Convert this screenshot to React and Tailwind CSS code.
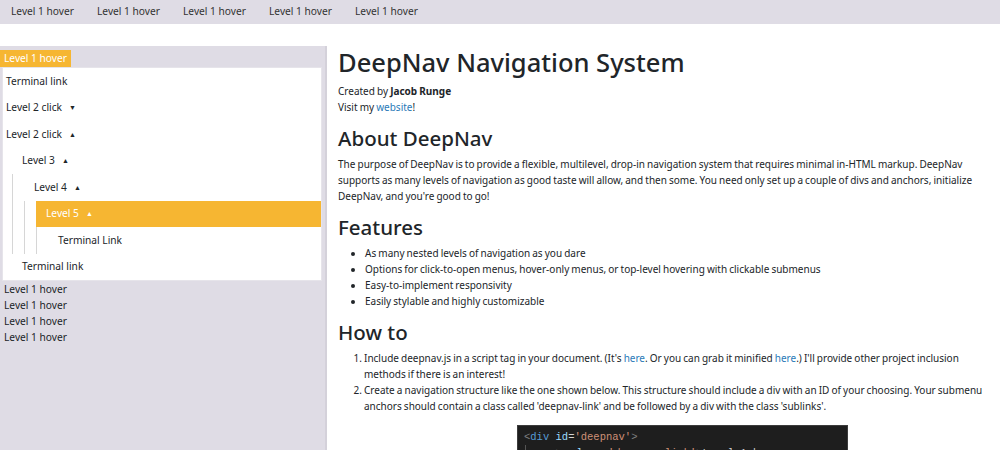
const topItems = ['Level 1 hover', 'Level 1 hover', 'Level 1 hover', 'Level 1 hover', 'Level 1 hover']

const Caret = ({ up }) => (
  <span className="ml-[7px] text-[7px] leading-none">{up ? '▲' : '▼'}</span>
)

const Row = ({ children, className = '' }) => (
  <div className={`h-[26.5px] flex items-center ${className}`}>{children}</div>
)

const Sidebar = () => (
  <aside className="w-[327px] shrink-0 bg-[#dfdce5] border-r-2 border-[#d4d1da] pt-[4px] text-[10.2px] text-[#212529]">
    <div className="inline-block bg-[#f6b632] text-white px-[4px] h-[17px] leading-[17px]">Level 1 hover</div>
    <div className="ml-[2px] w-[320px] bg-white border border-[#e6e4ea]">
      <Row className="pl-[3px]">Terminal link</Row>
      <Row className="pl-[3px]">Level 2 click <Caret /></Row>
      <Row className="pl-[3px]">Level 2 click <Caret up /></Row>
      <Row className="pl-[19px]">Level 3 <Caret up /></Row>
      <div className="ml-[9px] border-l border-[#d6d6d6]">
        <Row className="pl-[21px]">Level 4 <Caret up /></Row>
        <div className="ml-[11px] border-l border-[#d6d6d6] pl-[11px]">
          <Row className="pl-[10px] bg-[#f6b632] text-white">Level 5 <Caret up /></Row>
          <div className="border-l border-[#d6d6d6]">
            <Row className="pl-[21px]">Terminal Link</Row>
          </div>
        </div>
      </div>
      <Row className="pl-[19px]">Terminal link</Row>
    </div>
    <div className="pl-[4px] leading-[16px]">
      <div>Level 1 hover</div>
      <div>Level 1 hover</div>
      <div>Level 1 hover</div>
      <div>Level 1 hover</div>
    </div>
  </aside>
)

const Link = ({ children }) => <a className="text-[#2a7ab8]">{children}</a>

const Content = () => (
  <main className="flex-1 pl-[11px] pr-[6px] text-[10px] leading-[16px] [word-spacing:-0.5px] text-[#212529]">
    <h1 className="text-[25.5px] leading-[32px] font-medium mb-[5px] [word-spacing:0]">DeepNav Navigation System</h1>
    <p>Created by <b>Jacob Runge</b></p>
    <p>Visit my <Link>website</Link>!</p>
    <h2 className="mt-[11px] text-[20.5px] leading-[25px] font-medium mb-[5px] [word-spacing:0]">About DeepNav</h2>
    <p className="mb-[11px]">
      The purpose of DeepNav is to provide a flexible, multilevel, drop-in navigation system that requires minimal in-HTML markup. DeepNav supports as many levels of navigation as good taste will allow, and then some. You need only set up a couple of divs and anchors, initialize DeepNav, and you're good to go!
    </p>
    <h2 className="text-[20.5px] leading-[25px] font-medium mb-[5px]">Features</h2>
    <ul className="list-disc pl-[27px] mb-[11px]">
      <li>As many nested levels of navigation as you dare</li>
      <li>Options for click-to-open menus, hover-only menus, or top-level hovering with clickable submenus</li>
      <li>Easy-to-implement responsivity</li>
      <li>Easily stylable and highly customizable</li>
    </ul>
    <h2 className="text-[20.5px] leading-[25px] font-medium mb-[5px] [word-spacing:0]">How to</h2>
    <ol className="list-decimal pl-[26px] mb-[11px]">
      <li>Include deepnav.js in a script tag in your document. (It's <Link>here</Link>. Or you can grab it minified <Link>here</Link>.) I'll provide other project inclusion methods if there is an interest!</li>
      <li>Create a navigation structure like the one shown below. This structure should include a div with an ID of your choosing. Your submenu anchors should contain a class called 'deepnav-link' and be followed by a div with the class 'sublinks'.</li>
    </ol>
    <div className="ml-[179px] w-[331px] bg-[#1e1e1e] border border-[#3c3c3c] px-[6px] pt-[3px] font-['Liberation_Mono',monospace] text-[10.5px] leading-[16px] whitespace-pre [word-spacing:0]">
      <div>
        <span className="text-[#808080]">&lt;</span><span className="text-[#569cd6]">div</span>{' '}
        <span className="text-[#9cdcfe]">id</span><span className="text-[#d4d4d4]">=</span><span className="text-[#ce9178]">'deepnav'</span><span className="text-[#808080]">&gt;</span>
      </div>
      <div className="border-l border-[#555] ml-[1px]">
        <span>{'    '}</span><span className="text-[#808080]">&lt;</span><span className="text-[#569cd6]">a</span>{' '}
        <span className="text-[#9cdcfe]">class</span><span className="text-[#d4d4d4]">=</span><span className="text-[#ce9178]">'deepnav-link'</span><span className="text-[#808080]">&gt;</span><span className="text-[#d4d4d4]">Level 1 hover</span>
      </div>
    </div>
  </main>
)

export default function App() {
  return (
    <div className="w-full h-screen overflow-hidden bg-white font-['Noto_Sans',sans-serif]">
      <nav className="h-[24px] bg-[#dfdce5] flex items-center text-[10.2px] text-[#333]">
        {topItems.map((t, i) => (
          <a key={i} className="w-[86px] pl-[11px]">{t}</a>
        ))}
      </nav>
      <div className="mt-[22px] flex h-[404px]">
        <Sidebar />
        <Content />
      </div>
    </div>
  )
}
